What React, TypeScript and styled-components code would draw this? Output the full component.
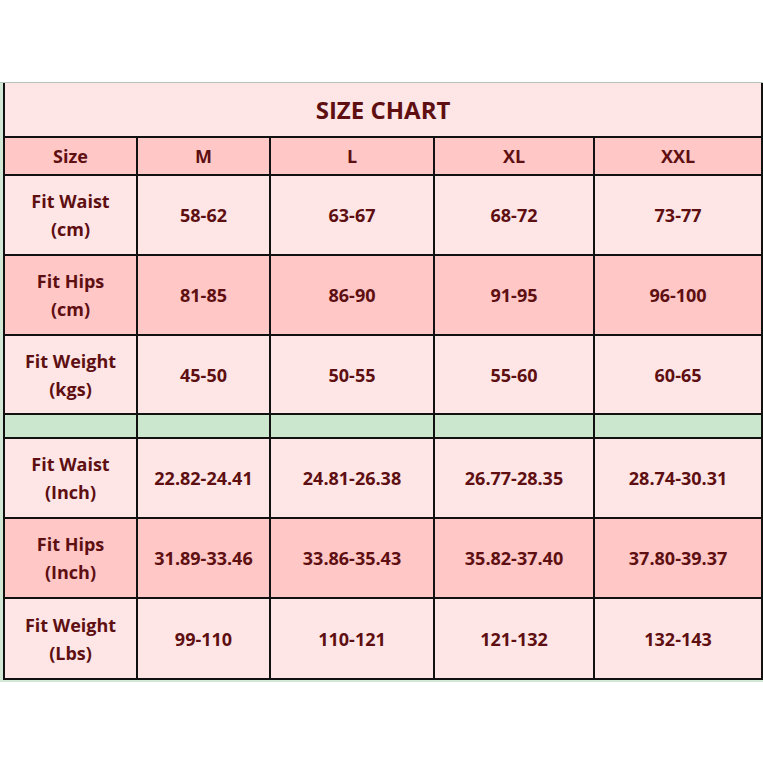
import React from "react";
import styled, { createGlobalStyle } from "styled-components";

const GlobalStyle = createGlobalStyle`
  html, body {
    margin: 0;
    padding: 0;
    background: #ffffff;
    font-family: "Open Sans", "Liberation Sans", sans-serif;
  }
`;

const Page = styled.div`
  width: 763px;
  height: 763px;
  padding-top: 82px;
  box-sizing: border-box;
`;

const Frame = styled.div`
  background: #d3e9d6;
  border-top: 1px solid #b8c4b9;
  padding: 0 2px 2px 3px;
  width: 763px;
  box-sizing: border-box;
`;

const Table = styled.table`
  width: 758px;
  table-layout: fixed;
  border-collapse: collapse;
  color: #5e0f12;
  font-weight: 700;
  font-size: 18px;
  text-align: center;
`;

const TitleCell = styled.th`
  height: 53px;
  background: #ffe6e6;
  font-size: 24px;
  font-weight: 700;
  border: 2px solid #111;
  border-top: none;
  padding: 0;
`;

const Cell = styled.td<{ $tone: "light" | "pink" | "green"; $h: number }>`
  height: ${(p) => p.$h}px;
  padding: 0;
  border: 2px solid #111;
  line-height: 28px;
  background: ${(p) =>
    p.$tone === "pink" ? "#ffc7c6" : p.$tone === "green" ? "#cbe8cf" : "#ffe6e6"};
`;

const widths = [133, 133, 164, 160, 168];

type Row = { label: React.ReactNode; values: string[]; tone: "light" | "pink" | "green"; h: number };

const rows: Row[] = [
  { label: "Size", values: ["M", "L", "XL", "XXL"], tone: "pink", h: 36 },
  { label: <>Fit Waist<br />(cm)</>, values: ["58-62", "63-67", "68-72", "73-77"], tone: "light", h: 78 },
  { label: <>Fit Hips<br />(cm)</>, values: ["81-85", "86-90", "91-95", "96-100"], tone: "pink", h: 78 },
  { label: <>Fit Weight<br />(kgs)</>, values: ["45-50", "50-55", "55-60", "60-65"], tone: "light", h: 77 },
  { label: "", values: ["", "", "", ""], tone: "green", h: 22 },
  { label: <>Fit Waist<br />(Inch)</>, values: ["22.82-24.41", "24.81-26.38", "26.77-28.35", "28.74-30.31"], tone: "light", h: 78 },
  { label: <>Fit Hips<br />(Inch)</>, values: ["31.89-33.46", "33.86-35.43", "35.82-37.40", "37.80-39.37"], tone: "pink", h: 78 },
  { label: <>Fit Weight<br />(Lbs)</>, values: ["99-110", "110-121", "121-132", "132-143"], tone: "light", h: 79 },
];

export default function App() {
  return (
    <>
      <GlobalStyle />
      <Page>
        <Frame>
          <Table>
            <colgroup>
              {widths.map((w, i) => (
                <col key={i} style={{ width: w }} />
              ))}
            </colgroup>
            <thead>
              <tr>
                <TitleCell colSpan={5}>SIZE CHART</TitleCell>
              </tr>
            </thead>
            <tbody>
              {rows.map((r, i) => (
                <tr key={i}>
                  <Cell $tone={r.tone} $h={r.h}>{r.label}</Cell>
                  {r.values.map((v, j) => (
                    <Cell key={j} $tone={r.tone} $h={r.h}>{v}</Cell>
                  ))}
                </tr>
              ))}
            </tbody>
          </Table>
        </Frame>
      </Page>
    </>
  );
}
